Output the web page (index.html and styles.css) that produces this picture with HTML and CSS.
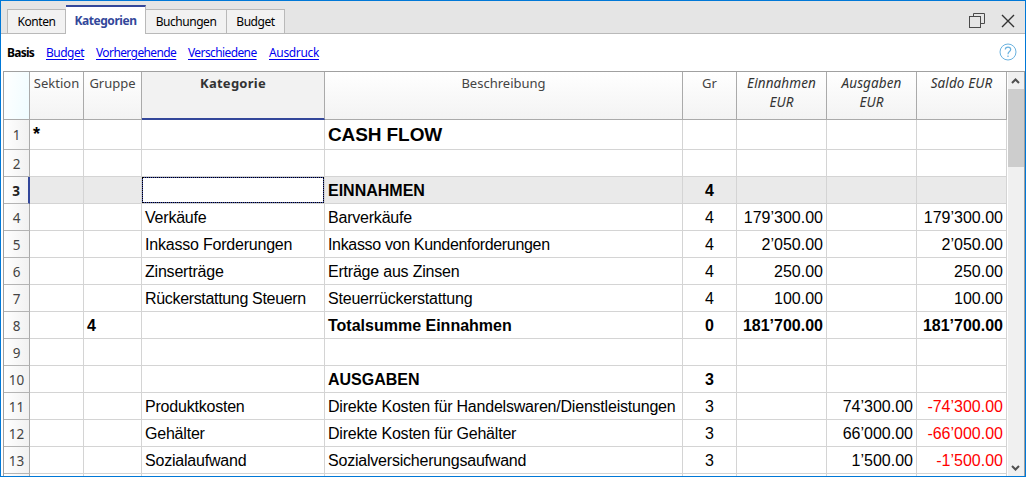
FILE: index.html
```html
<!DOCTYPE html>
<html lang="de">
<head>
<meta charset="utf-8">
<title>Kategorien</title>
<link rel="stylesheet" href="styles.css">
</head>
<body>
<div class="window">
  <header class="titlebar">
    <nav class="tabs">
      <div class="tab tab-konten"><span>Konten</span></div>
      <div class="tab tab-kategorien active"><span>Kategorien</span></div>
      <div class="tab tab-buchungen"><span>Buchungen</span></div>
      <div class="tab tab-budget"><span>Budget</span></div>
    </nav>
    <div class="controls">
      <svg width="16" height="16" viewBox="0 0 16 16" fill="none" stroke="#4a4a4a"><path d="M4.500 3.500V.5h11v10H12"/><rect x=".5" y="3.500" width="11" height="11"/></svg>
      <svg width="14" height="14" viewBox="0 0 14 14" fill="none" stroke="#333" stroke-width="1.4"><path d="M1 1l12 12M13 1L1 13"/></svg>
    </div>
  </header>
  <div class="views">
    <b class="v-basis">Basis</b>
    <a class="v-budget">Budget</a>
    <a class="v-vor">Vorhergehende</a>
    <a class="v-ver">Verschiedene</a>
    <a class="v-aus">Ausdruck</a>
    <svg class="help" width="18" height="18" viewBox="0 0 18 18" fill="none" stroke="#6ab2df"><circle cx="9" cy="9" r="8"/><path d="M6.300 6.500C6.300 3.400 11.700 3.400 11.700 6.500C11.700 8.500 9 8.700 9 11.200M9 12.600v1.400" stroke-width="1.200"/></svg>
  </div>
  <div class="table">
    <div class="grid">
      <div class="row head">
        <div class="corner"></div><div><span>Sektion</span></div><div><span>Gruppe</span></div><div class="current"><span>Kategorie</span></div><div><span>Beschreibung</span></div><div><span>Gr</span></div><div class="it"><span>Einnahmen<br>EUR</span></div><div class="it"><span>Ausgaben<br>EUR</span></div><div class="it"><span>Saldo EUR</span></div>
      </div>
      <div class="row title"><div class="n">1</div><div class="star">*</div><div></div><div></div><div class="big">CASH FLOW</div><div class="c"></div><div></div><div></div><div></div></div>
      <div class="row"><div class="n">2</div><div></div><div></div><div></div><div></div><div></div><div></div><div></div><div></div></div>
      <div class="row bold selected"><div class="n">3</div><div></div><div></div><div class="focus"><div class="frame"></div></div><div>EINNAHMEN</div><div class="c">4</div><div></div><div></div><div></div></div>
      <div class="row"><div class="n">4</div><div></div><div></div><div class="t">Verkäufe</div><div class="t">Barverkäufe</div><div class="c">4</div><div class="r">179’300.00</div><div></div><div class="r">179’300.00</div></div>
      <div class="row"><div class="n">5</div><div></div><div></div><div class="t">Inkasso Forderungen</div><div class="t tight">Inkasso von Kundenforderungen</div><div class="c">4</div><div class="r">2’050.00</div><div></div><div class="r">2’050.00</div></div>
      <div class="row"><div class="n">6</div><div></div><div></div><div class="t">Zinserträge</div><div class="t">Erträge aus Zinsen</div><div class="c">4</div><div class="r">250.00</div><div></div><div class="r">250.00</div></div>
      <div class="row"><div class="n">7</div><div></div><div></div><div class="t tight">Rückerstattung Steuern</div><div class="t">Steuerrückerstattung</div><div class="c">4</div><div class="r">100.00</div><div></div><div class="r">100.00</div></div>
      <div class="row bold"><div class="n">8</div><div></div><div>4</div><div></div><div>Totalsumme Einnahmen</div><div class="c">0</div><div class="r">181’700.00</div><div></div><div class="r">181’700.00</div></div>
      <div class="row"><div class="n">9</div><div></div><div></div><div></div><div></div><div></div><div></div><div></div><div></div></div>
      <div class="row bold"><div class="n">10</div><div></div><div></div><div></div><div>AUSGABEN</div><div class="c">3</div><div></div><div></div><div></div></div>
      <div class="row"><div class="n">11</div><div></div><div></div><div class="t">Produktkosten</div><div class="t">Direkte Kosten für Handelswaren/Dienstleistungen</div><div class="c">3</div><div></div><div class="r">74’300.00</div><div class="r neg">-74’300.00</div></div>
      <div class="row"><div class="n">12</div><div></div><div></div><div class="t">Gehälter</div><div class="t">Direkte Kosten für Gehälter</div><div class="c">3</div><div></div><div class="r">66’000.00</div><div class="r neg">-66’000.00</div></div>
      <div class="row"><div class="n">13</div><div></div><div></div><div class="t">Sozialaufwand</div><div class="t">Sozialversicherungsaufwand</div><div class="c">3</div><div></div><div class="r">1’500.00</div><div class="r neg">-1’500.00</div></div>
      <div class="row"><div class="n"></div><div></div><div></div><div></div><div></div><div></div><div></div><div></div><div></div></div>
    </div>
    <div class="scrollbar">
      <svg width="15" height="17" viewBox="0 0 15 17" fill="none" stroke="#505050" stroke-width="2"><path d="M4 11l3.500-3.500L11 11"/></svg>
      <div class="thumb"></div>
      <svg class="down" width="15" height="17" viewBox="0 0 15 17" fill="none" stroke="#505050" stroke-width="2"><path d="M4 7l3.500 3.500L11 7"/></svg>
    </div>
  </div>
</div>
</body>
</html>
```
FILE: styles.css
```css
* { box-sizing: border-box; }
body { margin: 0; overflow: hidden; font-family: "Noto Sans", "Open Sans", sans-serif; font-size: 12px; color: #000; }
.window { width: 1026px; height: 477px; border: 1px solid #0078d7; background: #fff; display: flex; flex-direction: column; overflow: hidden; }
.titlebar { height: 33px; flex: none; background: #e5e5e5; display: flex; justify-content: space-between; box-shadow: inset 0 -1px #b9b9b9; }
.tabs { display: flex; align-items: flex-end; padding-left: 6px; letter-spacing: -0.45px; }
.tab { height: 25px; border: 1px solid #b9b9b9; background: #f2f2f2; display: flex; justify-content: center; line-height: 24px; white-space: nowrap; }
.tab-konten { width: 59px; }
.tab-kategorien { width: 80px; }
.tab-buchungen { width: 81px; border-left: 0; }
.tab-budget { width: 58px; border-left: 0; }
.tab.active { height: 29px; background: #fff; border-top: 2px solid #33479a; border-bottom: 0; border-left: 0; color: #33479a; font-weight: bold; line-height: 28px; }
.controls { display: flex; gap: 16px; align-items: center; padding: 7px 10px 0 0; }
.views { height: 37px; flex: none; display: flex; align-items: center; padding: 0 8px 0 6px; white-space: nowrap; letter-spacing: -0.6px; }
.views a { color: #0000f0; text-decoration: underline; text-underline-offset: 2px; }
.v-basis { width: 39px; letter-spacing: -0.75px; }
.v-budget { width: 50px; letter-spacing: -0.5px; }
.v-vor { width: 92px; }
.v-ver { width: 81px; }
.v-aus { width: 60px; letter-spacing: -0.35px; }
.help { margin: -2px 0 0 auto; }
.table { margin-left: 2px; height: 405px; flex: none; display: flex; border-top: 1px solid #a0a0a0; border-left: 1px solid #a0a0a0; border-right: 1px solid #a0a0a0; overflow: hidden; }
.grid { width: 1003px; flex: none; font: 16px "Liberation Sans", Arial, sans-serif; }
.row { display: grid; grid-template-columns: 26px 54px 58px 183px 358px 54px 90px 90px 90px; height: 27px; line-height: 25px; }
.row > div { border-right: 1px solid #d4d4d4; border-bottom: 1px solid #d4d4d4; padding: 1px 3px 0; white-space: nowrap; overflow: hidden; }
.row > .t { letter-spacing: -0.21px; }
.row > .tight { letter-spacing: -0.33px; }
.row.title { height: 30px; line-height: 28px; font-weight: bold; }
.row.title > .star { font-size: 18px; line-height: 27px; }
.row.title > .big { font-size: 19px; letter-spacing: -0.1px; }
.row.bold { font-weight: bold; }
.row.selected { background: #eaeaea; }
.row > .c { text-align: center; }
.row > .r { text-align: right; }
.row > .neg { color: #f00; }
.row > .n { font: 13.500px/27px "Noto Sans", sans-serif; text-align: center; padding: 1px 0 0; color: #444; background: linear-gradient(90deg, #fff, #f1f1f1); border-right-color: #aaa; border-bottom-color: #b4b4b4; }
.row.title > .n { line-height: 29px; }
.row.selected > .n { font-weight: bold; color: #222; border-right: 2px solid #33479a; }
.row > .focus { background: #fff; padding: 0; }
.frame { height: 26px; border: 1px dotted #000; background: linear-gradient(#fff, #fff) padding-box, linear-gradient(#4655b0, #4655b0) border-box; }
.row.head { height: 48px; font: 13px/19px "Noto Sans", sans-serif; color: #444; }
.row.head > div { padding: 2px 0 0; text-align: center; background: linear-gradient(#fff, #f3f3f3); border-color: #aaa; }
.row.head > .corner { background: linear-gradient(100deg, #fff, #effcff); }
.row.head > .current { background: #f2f2f2; font-weight: bold; color: #333; border-bottom: 2px solid #33479a; letter-spacing: 0.25px; }
.row.head > .it { font-size: 13.500px; font-style: italic; color: #333; letter-spacing: 0.1px; }
.scrollbar { width: 16px; margin-left: 1px; background: #f0f0f0; display: flex; flex-direction: column; }
.thumb { height: 78px; background: #cdcdcd; }
.down { margin-top: auto; }
```
